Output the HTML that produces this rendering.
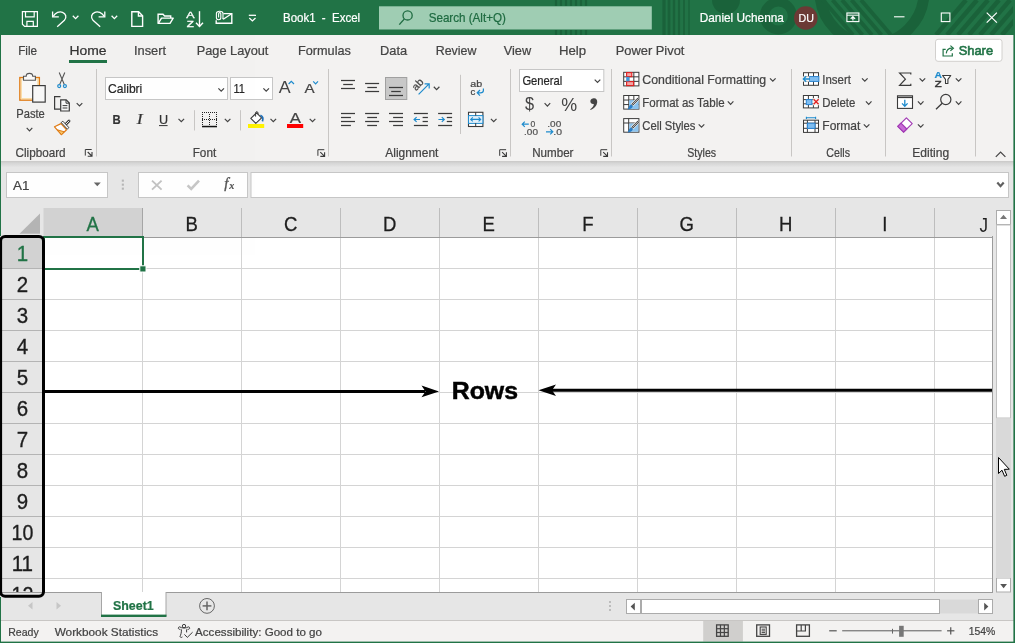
<!DOCTYPE html>
<html lang="en"><head><meta charset="utf-8"><title>Book1 - Excel</title>
<style>
html,body{margin:0;padding:0;background:#e6e6e6;overflow:hidden}
body{width:1015px;height:643px;font-family:"Liberation Sans",sans-serif}
svg{display:block;will-change:transform;opacity:0.999}
svg text{font-family:"Liberation Sans",sans-serif;white-space:pre}
</style></head><body>
<svg width="1015" height="643" viewBox="0 0 1015 643">
<g id="backgrounds">
<rect x="0" y="0" width="1015" height="643" fill="#e6e6e6"/>
<rect x="0" y="0" width="1015" height="35" fill="#217346"/>
<rect x="0" y="35" width="1015" height="126" fill="#f3f2f1"/>
<defs><linearGradient id="shad" x1="0" y1="0" x2="0" y2="1"><stop offset="0" stop-color="#c9c8c7"/><stop offset="0.35" stop-color="#d6d6d6"/><stop offset="1" stop-color="#e6e6e6"/></linearGradient></defs>
<rect x="0" y="161" width="1015" height="6.5" fill="url(#shad)"/>
</g>
<g id="grid">
<rect x="43.5" y="237" width="949" height="355" fill="#fff"/>
<rect x="43.5" y="236" width="949" height="1" fill="#e6e6e6"/>
<rect x="43.5" y="208" width="99" height="28.5" fill="#d2d2d2"/>
<rect x="1" y="237" width="42" height="31.5" fill="#d2d2d2"/>
<path d="M40 213.5L40 233.8L19.5 233.8Z" fill="#b4b4b4"/>
<line x1="142.5" y1="208" x2="142.5" y2="237" stroke="#bdbdbd" stroke-width="1" />
<line x1="241.5" y1="208" x2="241.5" y2="237" stroke="#bdbdbd" stroke-width="1" />
<line x1="340.5" y1="208" x2="340.5" y2="237" stroke="#bdbdbd" stroke-width="1" />
<line x1="439.5" y1="208" x2="439.5" y2="237" stroke="#bdbdbd" stroke-width="1" />
<line x1="538.5" y1="208" x2="538.5" y2="237" stroke="#bdbdbd" stroke-width="1" />
<line x1="637.5" y1="208" x2="637.5" y2="237" stroke="#bdbdbd" stroke-width="1" />
<line x1="736.5" y1="208" x2="736.5" y2="237" stroke="#bdbdbd" stroke-width="1" />
<line x1="835.5" y1="208" x2="835.5" y2="237" stroke="#bdbdbd" stroke-width="1" />
<line x1="934.5" y1="208" x2="934.5" y2="237" stroke="#bdbdbd" stroke-width="1" />
<line x1="142.5" y1="237" x2="142.5" y2="592" stroke="#d4d4d4" stroke-width="1" />
<line x1="241.5" y1="237" x2="241.5" y2="592" stroke="#d4d4d4" stroke-width="1" />
<line x1="340.5" y1="237" x2="340.5" y2="592" stroke="#d4d4d4" stroke-width="1" />
<line x1="439.5" y1="237" x2="439.5" y2="592" stroke="#d4d4d4" stroke-width="1" />
<line x1="538.5" y1="237" x2="538.5" y2="592" stroke="#d4d4d4" stroke-width="1" />
<line x1="637.5" y1="237" x2="637.5" y2="592" stroke="#d4d4d4" stroke-width="1" />
<line x1="736.5" y1="237" x2="736.5" y2="592" stroke="#d4d4d4" stroke-width="1" />
<line x1="835.5" y1="237" x2="835.5" y2="592" stroke="#d4d4d4" stroke-width="1" />
<line x1="934.5" y1="237" x2="934.5" y2="592" stroke="#d4d4d4" stroke-width="1" />
<line x1="1" y1="268.5" x2="43" y2="268.5" stroke="#b4b4b4" stroke-width="1" />
<line x1="43.5" y1="268.5" x2="992" y2="268.5" stroke="#d4d4d4" stroke-width="1" />
<line x1="1" y1="299.5" x2="43" y2="299.5" stroke="#b4b4b4" stroke-width="1" />
<line x1="43.5" y1="299.5" x2="992" y2="299.5" stroke="#d4d4d4" stroke-width="1" />
<line x1="1" y1="330.5" x2="43" y2="330.5" stroke="#b4b4b4" stroke-width="1" />
<line x1="43.5" y1="330.5" x2="992" y2="330.5" stroke="#d4d4d4" stroke-width="1" />
<line x1="1" y1="361.5" x2="43" y2="361.5" stroke="#b4b4b4" stroke-width="1" />
<line x1="43.5" y1="361.5" x2="992" y2="361.5" stroke="#d4d4d4" stroke-width="1" />
<line x1="1" y1="392.5" x2="43" y2="392.5" stroke="#b4b4b4" stroke-width="1" />
<line x1="43.5" y1="392.5" x2="992" y2="392.5" stroke="#d4d4d4" stroke-width="1" />
<line x1="1" y1="423.5" x2="43" y2="423.5" stroke="#b4b4b4" stroke-width="1" />
<line x1="43.5" y1="423.5" x2="992" y2="423.5" stroke="#d4d4d4" stroke-width="1" />
<line x1="1" y1="454.5" x2="43" y2="454.5" stroke="#b4b4b4" stroke-width="1" />
<line x1="43.5" y1="454.5" x2="992" y2="454.5" stroke="#d4d4d4" stroke-width="1" />
<line x1="1" y1="485.5" x2="43" y2="485.5" stroke="#b4b4b4" stroke-width="1" />
<line x1="43.5" y1="485.5" x2="992" y2="485.5" stroke="#d4d4d4" stroke-width="1" />
<line x1="1" y1="516.5" x2="43" y2="516.5" stroke="#b4b4b4" stroke-width="1" />
<line x1="43.5" y1="516.5" x2="992" y2="516.5" stroke="#d4d4d4" stroke-width="1" />
<line x1="1" y1="547.5" x2="43" y2="547.5" stroke="#b4b4b4" stroke-width="1" />
<line x1="43.5" y1="547.5" x2="992" y2="547.5" stroke="#d4d4d4" stroke-width="1" />
<line x1="1" y1="578.5" x2="43" y2="578.5" stroke="#b4b4b4" stroke-width="1" />
<line x1="43.5" y1="578.5" x2="992" y2="578.5" stroke="#d4d4d4" stroke-width="1" />
<line x1="43" y1="237.5" x2="992.5" y2="237.5" stroke="#9b9b9b" stroke-width="1" />
<line x1="142.5" y1="208" x2="142.5" y2="237" stroke="#a6a6a6" stroke-width="1" />
<line x1="992.5" y1="236" x2="992.5" y2="592.5" stroke="#9b9b9b" stroke-width="1" />
<line x1="1" y1="592.5" x2="101.5" y2="592.5" stroke="#9b9b9b" stroke-width="1" />
<line x1="166" y1="592.5" x2="993" y2="592.5" stroke="#9b9b9b" stroke-width="1" />
<text x="92.8" y="231.2" font-size="20.6" fill="#217346" text-anchor="middle" stroke="#217346" stroke-width="0.3" transform="translate(9.28 0) scale(0.9 1)">A</text>
<text x="191.8" y="231.2" font-size="20.6" fill="#1e1e1e" text-anchor="middle" stroke="#1e1e1e" stroke-width="0.3" transform="translate(19.18 0) scale(0.9 1)">B</text>
<text x="290.8" y="231.2" font-size="20.6" fill="#1e1e1e" text-anchor="middle" stroke="#1e1e1e" stroke-width="0.3" transform="translate(29.08 0) scale(0.9 1)">C</text>
<text x="389.8" y="231.2" font-size="20.6" fill="#1e1e1e" text-anchor="middle" stroke="#1e1e1e" stroke-width="0.3" transform="translate(38.98 0) scale(0.9 1)">D</text>
<text x="488.8" y="231.2" font-size="20.6" fill="#1e1e1e" text-anchor="middle" stroke="#1e1e1e" stroke-width="0.3" transform="translate(48.88 0) scale(0.9 1)">E</text>
<text x="587.8" y="231.2" font-size="20.6" fill="#1e1e1e" text-anchor="middle" stroke="#1e1e1e" stroke-width="0.3" transform="translate(58.78 0) scale(0.9 1)">F</text>
<text x="686.8" y="231.2" font-size="20.6" fill="#1e1e1e" text-anchor="middle" stroke="#1e1e1e" stroke-width="0.3" transform="translate(68.68 0) scale(0.9 1)">G</text>
<text x="785.8" y="231.2" font-size="20.6" fill="#1e1e1e" text-anchor="middle" stroke="#1e1e1e" stroke-width="0.3" transform="translate(78.58 0) scale(0.9 1)">H</text>
<text x="884.8" y="231.2" font-size="20.6" fill="#1e1e1e" text-anchor="middle" stroke="#1e1e1e" stroke-width="0.3" transform="translate(88.48 0) scale(0.9 1)">I</text>
<text x="979.5" y="231.8" font-size="20.4" fill="#1e1e1e" textLength="8.5" lengthAdjust="spacingAndGlyphs">J</text>
<text x="22.4" y="260.9" font-size="22.3" fill="#217346" textLength="11.4" lengthAdjust="spacingAndGlyphs" text-anchor="middle" stroke="#217346" stroke-width="0.35">1</text>
<text x="22.4" y="291.9" font-size="22.3" fill="#1e1e1e" textLength="11.4" lengthAdjust="spacingAndGlyphs" text-anchor="middle" stroke="#1e1e1e" stroke-width="0.35">2</text>
<text x="22.4" y="322.9" font-size="22.3" fill="#1e1e1e" textLength="11.4" lengthAdjust="spacingAndGlyphs" text-anchor="middle" stroke="#1e1e1e" stroke-width="0.35">3</text>
<text x="22.4" y="353.9" font-size="22.3" fill="#1e1e1e" textLength="11.4" lengthAdjust="spacingAndGlyphs" text-anchor="middle" stroke="#1e1e1e" stroke-width="0.35">4</text>
<text x="22.4" y="384.9" font-size="22.3" fill="#1e1e1e" textLength="11.4" lengthAdjust="spacingAndGlyphs" text-anchor="middle" stroke="#1e1e1e" stroke-width="0.35">5</text>
<text x="22.4" y="415.9" font-size="22.3" fill="#1e1e1e" textLength="11.4" lengthAdjust="spacingAndGlyphs" text-anchor="middle" stroke="#1e1e1e" stroke-width="0.35">6</text>
<text x="22.4" y="446.9" font-size="22.3" fill="#1e1e1e" textLength="11.4" lengthAdjust="spacingAndGlyphs" text-anchor="middle" stroke="#1e1e1e" stroke-width="0.35">7</text>
<text x="22.4" y="477.9" font-size="22.3" fill="#1e1e1e" textLength="11.4" lengthAdjust="spacingAndGlyphs" text-anchor="middle" stroke="#1e1e1e" stroke-width="0.35">8</text>
<text x="22.4" y="508.9" font-size="22.3" fill="#1e1e1e" textLength="11.4" lengthAdjust="spacingAndGlyphs" text-anchor="middle" stroke="#1e1e1e" stroke-width="0.35">9</text>
<text x="22.4" y="539.9" font-size="22.3" fill="#1e1e1e" textLength="21.8" lengthAdjust="spacingAndGlyphs" text-anchor="middle" stroke="#1e1e1e" stroke-width="0.35">10</text>
<text x="22.4" y="570.9" font-size="22.3" fill="#1e1e1e" textLength="21.4" lengthAdjust="spacingAndGlyphs" text-anchor="middle" stroke="#1e1e1e" stroke-width="0.35">11</text>
<clipPath id="c12"><rect x="0" y="578" width="43" height="14"/></clipPath>
<text x="22.4" y="601.9" font-size="22.3" fill="#1e1e1e" textLength="21.8" lengthAdjust="spacingAndGlyphs" text-anchor="middle" stroke="#1e1e1e" stroke-width="0.35" clip-path="url(#c12)">12</text>
<rect x="44" y="237" width="99" height="32" fill="none" stroke="#217346" stroke-width="2"/>
<rect x="139.8" y="265.8" width="6.2" height="6.2" fill="#217346" stroke="#fff" stroke-width="1"/>
</g>
<g id="annotation">
<rect x="0.6" y="236.6" width="42.9" height="359.7" fill="none" stroke="#000" stroke-width="3" rx="4.5"/>
<line x1="44" y1="391.45" x2="425" y2="391.45" stroke="#000" stroke-width="3" />
<path d="M439 391.4L421.5 385.6L425.5 391.4L421.5 397.2Z" fill="#000"/>
<line x1="552" y1="390.2" x2="992" y2="390.2" stroke="#000" stroke-width="3" />
<path d="M538.5 390.2L556 384.4L552 390.2L556 396Z" fill="#000"/>
<text x="451.7" y="399.3" font-size="23" fill="#000" textLength="66.3" lengthAdjust="spacingAndGlyphs" font-weight="bold" stroke="#000" stroke-width="0.45">Rows</text>
</g>
<g id="scrollbars">
<rect x="996.5" y="210.5" width="14" height="14" fill="#fff" stroke="#ababab" stroke-width="1"/>
<path d="M1000 218.9L1003.5 214.8L1007 218.9Z" fill="#777"/>
<rect x="996.5" y="225" width="14" height="193" fill="#fff" stroke="#c0c0c0" stroke-width="1"/>
<rect x="996.5" y="578" width="14" height="14" fill="#fff" stroke="#ababab" stroke-width="1"/>
<path d="M1000.2 584L1003.6 588.2L1007 584Z" fill="#555"/>
<rect x="996" y="418.5" width="15" height="159.5" fill="#d9d9d9"/>
<path d="M998.5 457.5L998.5 473.5L1002 470.2L1004.6 476.3L1006.8 475.3L1004.3 469.4L1009.3 469.2Z" fill="#fff" stroke="#000" stroke-width="1"/>
</g>
<g id="sheetbar">
<rect x="101.5" y="592" width="64.5" height="23" fill="#fff"/>
<line x1="101.5" y1="592" x2="101.5" y2="616" stroke="#a6a6a6" stroke-width="1" />
<line x1="166" y1="592" x2="166" y2="616" stroke="#a6a6a6" stroke-width="1" />
<rect x="101" y="614.6" width="65.5" height="2.4" fill="#217346"/>
<text x="113.0" y="609.9" font-size="12.9" fill="#217346" stroke="#217346" stroke-width="0.22" textLength="40.7" lengthAdjust="spacingAndGlyphs" font-weight="bold">Sheet1</text>
<path d="M32.5 602L32.5 609.5L28 605.8Z" fill="#c6c6c6"/>
<path d="M56.5 602L56.5 609.5L61 605.8Z" fill="#c6c6c6"/>
<circle cx="207" cy="605.9" r="7.4" fill="none" stroke="#666" stroke-width="1"/>
<line x1="202.6" y1="605.9" x2="211.4" y2="605.9" stroke="#666" stroke-width="1.5" />
<line x1="207" y1="601.5" x2="207" y2="610.3" stroke="#666" stroke-width="1.5" />
<rect x="609.2" y="601.2" width="1.6" height="1.6" fill="#a6a6a6"/>
<rect x="609.2" y="605.2" width="1.6" height="1.6" fill="#a6a6a6"/>
<rect x="609.2" y="609.2" width="1.6" height="1.6" fill="#a6a6a6"/>
<rect x="978" y="599" width="15" height="15" fill="#d9d9d9"/>
<rect x="940" y="599.5" width="38.5" height="14" fill="#d9d9d9"/>
<rect x="626.5" y="599.5" width="14" height="14" fill="#fff" stroke="#ababab" stroke-width="1"/>
<path d="M634.8 602.8L634.8 610.4L630.6 606.6Z" fill="#555"/>
<rect x="641.5" y="599.5" width="298" height="14" fill="#fff" stroke="#ababab" stroke-width="1"/>
<rect x="978.5" y="599.5" width="14" height="14" fill="#fff" stroke="#ababab" stroke-width="1"/>
<path d="M984.2 602.8L984.2 610.4L988.4 606.6Z" fill="#555"/>
</g>
<g id="statusbar">
<rect x="0" y="620.5" width="1015" height="22.5" fill="#f3f2f1"/>
<line x1="0" y1="620.5" x2="1015" y2="620.5" stroke="#c8c6c4" stroke-width="1" />
<text x="8.2" y="635.5" font-size="11.3" fill="#444" stroke="#444" stroke-width="0.22" textLength="30.5" lengthAdjust="spacingAndGlyphs">Ready</text>
<text x="54.7" y="635.5" font-size="11.3" fill="#444" stroke="#444" stroke-width="0.22" textLength="103.4" lengthAdjust="spacingAndGlyphs">Workbook Statistics</text>
<text x="195.1" y="635.6" font-size="11.3" fill="#444" stroke="#444" stroke-width="0.22" textLength="126.9" lengthAdjust="spacingAndGlyphs">Accessibility: Good to go</text>
<rect x="703.2" y="621" width="39.7" height="20.6" fill="#d0cfcd"/>
<rect x="716.6" y="624.9" width="11.6" height="11.4" fill="none" stroke="#444" stroke-width="1.3"/>
<line x1="720.47" y1="624.9" x2="720.47" y2="636.3" stroke="#444" stroke-width="1.2" />
<line x1="716.6" y1="628.6999999999999" x2="728.2" y2="628.6999999999999" stroke="#444" stroke-width="1.2" />
<line x1="724.34" y1="624.9" x2="724.34" y2="636.3" stroke="#444" stroke-width="1.2" />
<line x1="716.6" y1="632.5" x2="728.2" y2="632.5" stroke="#444" stroke-width="1.2" />
<rect x="756.7" y="624.9" width="12.8" height="11.4" fill="none" stroke="#444" stroke-width="1.3"/>
<rect x="760.2" y="627" width="6" height="7.4" fill="none" stroke="#444" stroke-width="1.1"/>
<line x1="761.6" y1="629.2" x2="765" y2="629.2" stroke="#444" stroke-width="1" />
<line x1="761.6" y1="630.9" x2="765" y2="630.9" stroke="#444" stroke-width="1" />
<line x1="761.6" y1="632.6" x2="765" y2="632.6" stroke="#444" stroke-width="1" />
<rect x="796.6" y="624.9" width="12.8" height="11.4" fill="none" stroke="#444" stroke-width="1.3"/>
<path d="M801.2 624.9V630.6M805.4 624.9V631H796.6" fill="none" stroke="#444" stroke-width="1.2"/>
<line x1="829.2" y1="630.8" x2="836.7" y2="630.8" stroke="#555" stroke-width="1.2" />
<line x1="842.2" y1="630.8" x2="941.6" y2="630.8" stroke="#5a5a5a" stroke-width="1" />
<line x1="892.5" y1="628.8" x2="892.5" y2="633.6" stroke="#666" stroke-width="1" />
<rect x="899.1" y="625.8" width="4.6" height="11" fill="#777"/>
<line x1="947.1" y1="630.8" x2="954.4" y2="630.8" stroke="#555" stroke-width="1.2" />
<line x1="950.75" y1="627.2" x2="950.75" y2="634.4" stroke="#555" stroke-width="1.2" />
<circle cx="184" cy="626.1" r="1.7" fill="none" stroke="#3b3b3b" stroke-width="1"/>
<path d="M180.4 629.4C178 629.6 177.6 627.2 179.6 626.8C181.4 628.4 186.6 628.4 188.4 626.8C190.4 627.2 190 629.6 187.6 629.4" fill="none" stroke="#3b3b3b" stroke-width="1"/>
<path d="M181.4 629.4C181.6 633 180.6 635 180 636.6C180.4 637.6 181.6 637.6 182.4 637" fill="none" stroke="#3b3b3b" stroke-width="1"/>
<path d="M186.6 629.4V632.4" fill="none" stroke="#3b3b3b" stroke-width="1"/>
<path d="M184.4 634.4L187.3 637.4L192.6 632.2" fill="none" stroke="#3b3b3b" stroke-width="1"/>
<text x="968.7" y="634.7" font-size="11.3" fill="#444" stroke="#444" stroke-width="0.22" textLength="26.6" lengthAdjust="spacingAndGlyphs">154%</text>
</g>
<g id="border">
<rect x="0" y="35" width="1" height="201" fill="#217346"/>
<rect x="0" y="597" width="1" height="46" fill="#217346"/>
<rect x="1013.4" y="35" width="1.6" height="608" fill="#217346"/>
<rect x="0" y="641.6" width="1015" height="1.4" fill="#217346"/>
</g>
<g id="titlebar">
<clipPath id="tbclip"><rect x="0" y="0" width="1013" height="35"/></clipPath>
<g clip-path="url(#tbclip)" opacity="0.9" fill="none" stroke="#1a6139">
<circle cx="872" cy="-8" r="52" stroke-width="11"/>
<circle cx="778.4" cy="16" r="14" stroke-width="9"/>
<circle cx="726" cy="0" r="14" fill="#1a6139" stroke="none"/>
<line x1="556" y1="0" x2="556" y2="6" stroke="#1a6139" stroke-width="2.2" />
<line x1="556" y1="30" x2="556" y2="35" stroke="#1a6139" stroke-width="2.2" />
<line x1="561" y1="0" x2="561" y2="6" stroke="#1a6139" stroke-width="2.2" />
<line x1="561" y1="30" x2="561" y2="35" stroke="#1a6139" stroke-width="2.2" />
<line x1="566" y1="0" x2="566" y2="6" stroke="#1a6139" stroke-width="2.2" />
<line x1="566" y1="30" x2="566" y2="35" stroke="#1a6139" stroke-width="2.2" />
<line x1="571" y1="0" x2="571" y2="6" stroke="#1a6139" stroke-width="2.2" />
<line x1="571" y1="30" x2="571" y2="35" stroke="#1a6139" stroke-width="2.2" />
<line x1="576" y1="0" x2="576" y2="6" stroke="#1a6139" stroke-width="2.2" />
<line x1="576" y1="30" x2="576" y2="35" stroke="#1a6139" stroke-width="2.2" />
<line x1="581" y1="0" x2="581" y2="6" stroke="#1a6139" stroke-width="2.2" />
<line x1="581" y1="30" x2="581" y2="35" stroke="#1a6139" stroke-width="2.2" />
<line x1="586" y1="0" x2="586" y2="6" stroke="#1a6139" stroke-width="2.2" />
<line x1="586" y1="30" x2="586" y2="35" stroke="#1a6139" stroke-width="2.2" />
<line x1="664" y1="0" x2="664" y2="35" stroke="#1a6139" stroke-width="3.2" />
<line x1="669" y1="0" x2="669" y2="35" stroke="#1a6139" stroke-width="2.85" />
<line x1="674" y1="0" x2="674" y2="35" stroke="#1a6139" stroke-width="2.5" />
<line x1="679" y1="0" x2="679" y2="35" stroke="#1a6139" stroke-width="2.1500000000000004" />
<line x1="684" y1="0" x2="684" y2="35" stroke="#1a6139" stroke-width="1.8000000000000003" />
<line x1="689" y1="0" x2="689" y2="35" stroke="#1a6139" stroke-width="1.4500000000000002" />
<line x1="823.0" y1="0" x2="853.0" y2="35" stroke="#1a6139" stroke-width="4" />
<line x1="832.5" y1="0" x2="862.5" y2="35" stroke="#1a6139" stroke-width="4" />
<line x1="842.0" y1="0" x2="872.0" y2="35" stroke="#1a6139" stroke-width="4" />
<line x1="851.5" y1="0" x2="881.5" y2="35" stroke="#1a6139" stroke-width="4" />
<line x1="861.0" y1="0" x2="891.0" y2="35" stroke="#1a6139" stroke-width="4" />
<line x1="966" y1="0" x2="936" y2="35" stroke="#1a6139" stroke-width="4.5" />
<line x1="977" y1="0" x2="947" y2="35" stroke="#1a6139" stroke-width="4.5" />
<line x1="988" y1="0" x2="958" y2="35" stroke="#1a6139" stroke-width="4.5" />
<line x1="999" y1="0" x2="969" y2="35" stroke="#1a6139" stroke-width="4.5" />
<line x1="1010" y1="0" x2="980" y2="35" stroke="#1a6139" stroke-width="4.5" />
<line x1="1021" y1="0" x2="991" y2="35" stroke="#1a6139" stroke-width="4.5" />
<line x1="1032" y1="0" x2="1002" y2="35" stroke="#1a6139" stroke-width="4.5" />
</g>
<path d="M22.4 11.7H37.4V26.4H24.6L22.4 24.2Z" fill="none" stroke="#fff" stroke-width="1.2"/>
<path d="M25.5 11.7V16.8H34.2V11.7" fill="none" stroke="#fff" stroke-width="1.2"/>
<path d="M26.9 26.4V21.4H33.3V26.4" fill="none" stroke="#fff" stroke-width="1.2"/>
<path d="M52.6 11.4V16.8H58.8" fill="none" stroke="#fff" stroke-width="1.3"/>
<path d="M53.2 16.4C55.5 12.5 59.5 11.2 62.5 12.3C66 13.6 67 17.5 64.4 20.3L57.2 26.8" fill="none" stroke="#fff" stroke-width="1.3"/>
<path d="M72.8 15.75L75.6 18.65L78.39999999999999 15.75" fill="none" stroke="#fff" stroke-width="1.3"/>
<path d="M104.8 11.4V16.8H98.6" fill="none" stroke="#fff" stroke-width="1.3"/>
<path d="M104.2 16.4C101.9 12.5 97.9 11.2 94.9 12.3C91.4 13.6 90.4 17.5 93 20.3L100.2 26.8" fill="none" stroke="#fff" stroke-width="1.3"/>
<path d="M111.60000000000001 15.75L114.4 18.65L117.2 15.75" fill="none" stroke="#fff" stroke-width="1.3"/>
<path d="M131.8 11.8H138.6L142.6 15.8V26.4H131.8Z" fill="none" stroke="#fff" stroke-width="1.4"/>
<path d="M138.4 11.8V16H142.6" fill="none" stroke="#fff" stroke-width="1.3"/>
<path d="M158.1 23.4V14.2H163L164.6 16H170.7V18" fill="none" stroke="#fff" stroke-width="1.4"/>
<path d="M158.3 23.4L161.5 18.1H173.2L170 23.4Z" fill="none" stroke="#fff" stroke-width="1.4" stroke-linejoin="round"/>
<text x="186.2" y="18.2" font-size="8.6" fill="#fff" textLength="8.3" lengthAdjust="spacingAndGlyphs" stroke="#fff" stroke-width="0.3">A</text>
<text x="186.7" y="26.8" font-size="8.6" fill="#fff" textLength="7.1" lengthAdjust="spacingAndGlyphs" stroke="#fff" stroke-width="0.3">Z</text>
<line x1="199.5" y1="11.2" x2="199.5" y2="26.4" stroke="#fff" stroke-width="1.4" />
<path d="M196 22.8L199.5 26.5L203 22.8" fill="none" stroke="#fff" stroke-width="1.4"/>
<path d="M223.4 13.6H231.8V23.2H216.2V20.2" fill="none" stroke="#fff" stroke-width="1.4"/>
<path d="M231.6 13.8L223.6 19L222.4 18.2" fill="none" stroke="#fff" stroke-width="1.3"/>
<path d="M218.6 17.6V13.8C218.6 12.2 220.8 12.2 220.8 13.8V17.8C220.8 20.4 216.4 20.4 216.4 17.8V13.4C216.4 10.6 223 10.6 223 13.4V18" fill="none" stroke="#fff" stroke-width="1.1"/>
<line x1="248.8" y1="15.3" x2="256" y2="15.3" stroke="#fff" stroke-width="1.3" />
<path d="M249.3 17.95L252.4 20.849999999999998L255.5 17.95" fill="none" stroke="#fff" stroke-width="1.3"/>
<text x="283.0" y="22" font-size="12.4" fill="#fff" stroke="#fff" stroke-width="0.22" textLength="77.1" lengthAdjust="spacingAndGlyphs">Book1  -  Excel</text>
<rect x="379" y="6.3" width="272.8" height="23.2" fill="#9fcdb3"/>
<circle cx="407.6" cy="15.4" r="4.6" fill="none" stroke="#1e6b41" stroke-width="1.3"/>
<line x1="404.4" y1="18.9" x2="399.3" y2="24.6" stroke="#1e6b41" stroke-width="1.4" />
<text x="428.7" y="22" font-size="12.4" fill="#1e6b41" stroke="#1e6b41" stroke-width="0.22" textLength="77.2" lengthAdjust="spacingAndGlyphs">Search (Alt+Q)</text>
<text x="699.7" y="22" font-size="12.4" fill="#fff" stroke="#fff" stroke-width="0.22" textLength="84.2" lengthAdjust="spacingAndGlyphs">Daniel Uchenna</text>
<circle cx="805.8" cy="18" r="11.8" fill="#6b3a35"/>
<text x="798.5" y="22" font-size="11.3" fill="#fff" stroke="#fff" stroke-width="0.22" textLength="15.4" lengthAdjust="spacingAndGlyphs">DU</text>
<rect x="846.9" y="13" width="12" height="8.6" fill="none" stroke="#fff" stroke-width="1.1"/>
<line x1="846.9" y1="15.2" x2="858.9" y2="15.2" stroke="#fff" stroke-width="1" />
<path d="M852.9 20.6V16.8M850.7 18.8L852.9 16.6L855.1 18.8" fill="none" stroke="#fff" stroke-width="1.2"/>
<line x1="894" y1="16.8" x2="904.5" y2="16.8" stroke="#fff" stroke-width="1.1" />
<rect x="941.3" y="13" width="8.6" height="8.6" fill="none" stroke="#fff" stroke-width="1.1"/>
<path d="M986.7 12.6L996.9 22.6M996.9 12.6L986.7 22.6" fill="none" stroke="#fff" stroke-width="1.2"/>
</g>
<g id="tabs">
<text x="18.2" y="55" font-size="12.4" fill="#444" stroke="#444" stroke-width="0.22" textLength="18.9" lengthAdjust="spacingAndGlyphs">File</text>
<text x="69.5" y="55" font-size="12.4" fill="#333" stroke="#333" stroke-width="0.22" textLength="37.1" lengthAdjust="spacingAndGlyphs">Home</text>
<text x="134.0" y="55" font-size="12.4" fill="#444" stroke="#444" stroke-width="0.22" textLength="32.1" lengthAdjust="spacingAndGlyphs">Insert</text>
<text x="196.7" y="55" font-size="12.4" fill="#444" stroke="#444" stroke-width="0.22" textLength="71.7" lengthAdjust="spacingAndGlyphs">Page Layout</text>
<text x="298.0" y="55" font-size="12.4" fill="#444" stroke="#444" stroke-width="0.22" textLength="52.9" lengthAdjust="spacingAndGlyphs">Formulas</text>
<text x="380.0" y="55" font-size="12.4" fill="#444" stroke="#444" stroke-width="0.22" textLength="27.1" lengthAdjust="spacingAndGlyphs">Data</text>
<text x="435.7" y="55" font-size="12.4" fill="#444" stroke="#444" stroke-width="0.22" textLength="40.7" lengthAdjust="spacingAndGlyphs">Review</text>
<text x="503.7" y="55" font-size="12.4" fill="#444" stroke="#444" stroke-width="0.22" textLength="27.4" lengthAdjust="spacingAndGlyphs">View</text>
<text x="559.0" y="55" font-size="12.4" fill="#444" stroke="#444" stroke-width="0.22" textLength="27.1" lengthAdjust="spacingAndGlyphs">Help</text>
<text x="615.7" y="55" font-size="12.4" fill="#444" stroke="#444" stroke-width="0.22" textLength="68.7" lengthAdjust="spacingAndGlyphs">Power Pivot</text>
<rect x="69" y="60" width="38" height="3" fill="#217346"/>
<rect x="935.5" y="39.3" width="66.5" height="22" fill="#fff" stroke="#d2d0ce" stroke-width="1" rx="2.5"/>
<path d="M945.7 49.4H943.1V56H952.3V53.2" fill="none" stroke="#217346" stroke-width="1.2"/>
<path d="M946.3 53.4C946.6 50 948.6 48.2 952 48.2" fill="none" stroke="#217346" stroke-width="1.2"/>
<path d="M950.4 45.6L953.4 48.2L950.4 50.8" fill="none" stroke="#217346" stroke-width="1.2"/>
<text x="958.7" y="54.6" font-size="12.8" fill="#217346" textLength="34.4" lengthAdjust="spacingAndGlyphs" stroke="#217346" stroke-width="0.6">Share</text>
</g>
<g id="formulabar">
<rect x="6.5" y="172.5" width="101" height="25" fill="#fff" stroke="#c6c6c6" stroke-width="1"/>
<text x="13.0" y="190" font-size="12.6" fill="#444" stroke="#444" stroke-width="0.22" textLength="16.4" lengthAdjust="spacingAndGlyphs">A1</text>
<path d="M93.8 182.6H100.8L97.3 186.2Z" fill="#666"/>
<rect x="121.8" y="179.6" width="2.1" height="2.1" fill="#b6b6b6"/>
<rect x="121.8" y="183.6" width="2.1" height="2.1" fill="#b6b6b6"/>
<rect x="121.8" y="187.6" width="2.1" height="2.1" fill="#b6b6b6"/>
<rect x="138.5" y="172.5" width="109" height="25" fill="#fff" stroke="#c6c6c6" stroke-width="1"/>
<path d="M152 180.6L161.6 189.6M161.6 180.6L152 189.6" fill="none" stroke="#c2c2c2" stroke-width="1.9"/>
<path d="M187.6 185.4L191.2 189L199 180.6" fill="none" stroke="#c6c6c6" stroke-width="2.6"/>
<text x="224.2" y="187.8" font-size="15" fill="#555" font-style="italic" style='font-family:"Liberation Serif", serif' stroke="#555" stroke-width="0.35">f</text>
<text x="229.2" y="189.2" font-size="10" fill="#555" stroke="#555" stroke-width="0.22" font-weight="bold" font-style="italic" style='font-family:"Liberation Serif", serif'>x</text>
<rect x="251" y="172.5" width="757.5" height="25" fill="#fff" stroke="#c6c6c6" stroke-width="1"/>
<path d="M997.3 182.6L1000.5 186.20000000000002L1003.7 182.6" fill="none" stroke="#606060" stroke-width="2.2"/>
</g>
<g id="ribbon-clipboard">
<rect x="19.9" y="77.6" width="19.4" height="22.5" fill="#faf9f8" stroke="#e07b16" stroke-width="1.5"/>
<rect x="21.3" y="79" width="16.6" height="19.7" fill="none" stroke="#fbdca6" stroke-width="1.3"/>
<path d="M23.5 80.2V76.3H26.2C26.2 72.4 32.7 72.4 32.7 76.3H35.4V80.2Z" fill="#faf9f8" stroke="#555" stroke-width="1.1"/>
<rect x="32.7" y="85.6" width="12.5" height="16.5" fill="#f8f8f8" stroke="#3b3b3b" stroke-width="1.2"/>
<text x="16.3" y="117.6" font-size="12.4" fill="#444" stroke="#444" stroke-width="0.22" textLength="28.5" lengthAdjust="spacingAndGlyphs">Paste</text>
<path d="M26.7 127.95L29.5 130.85L32.3 127.95" fill="none" stroke="#444" stroke-width="1.2"/>
<path d="M59.2 72.5L64.2 84.3M64.8 72.5L59.8 84.3" fill="none" stroke="#555" stroke-width="1.1"/>
<circle cx="59.2" cy="86.1" r="1.5" fill="none" stroke="#1e8bcd" stroke-width="1.2"/>
<circle cx="64.9" cy="86.1" r="1.5" fill="none" stroke="#1e8bcd" stroke-width="1.2"/>
<path d="M60.6 109.2H54.6V96.7H60.5" fill="none" stroke="#3b3b3b" stroke-width="1.2"/>
<path d="M60.7 99.9H66.2L69.3 103V111H60.7Z" fill="#f8f8f8" stroke="#3b3b3b" stroke-width="1.2"/>
<path d="M66 100V103.2H69.2" fill="none" stroke="#3b3b3b" stroke-width="1"/>
<line x1="62.6" y1="105.6" x2="67.4" y2="105.6" stroke="#3b3b3b" stroke-width="1" />
<line x1="62.6" y1="108" x2="67.4" y2="108" stroke="#3b3b3b" stroke-width="1" />
<path d="M76.7 103.05L79.5 105.95L82.3 103.05" fill="none" stroke="#444" stroke-width="1.2"/>
<path d="M54.5 126.8L61 123.6L66.6 129.8L61.3 134.7Z" fill="#fff" stroke="#e07b16" stroke-width="1.2" stroke-linejoin="round"/>
<path d="M57.4 129.8L64.2 131.8L61.3 134.5Z" fill="#f9c868" stroke="#e07b16" stroke-width="1" stroke-linejoin="round"/>
<path d="M65.6 124.4L69 121" fill="none" stroke="#3b3b3b" stroke-width="2.8" stroke-linecap="round"/>
<path d="M65.6 124.4L69 121" fill="none" stroke="#fff" stroke-width="0.9" stroke-linecap="round"/>
<path d="M61.2 122.6L62.8 121.2L68.9 127.6L67.3 129.1Z" fill="#fff" stroke="#3b3b3b" stroke-width="1" stroke-linejoin="round"/>
<text x="15.5" y="157" font-size="12.4" fill="#444" stroke="#444" stroke-width="0.22" textLength="50.1" lengthAdjust="spacingAndGlyphs">Clipboard</text>
<path d="M85.3 155.6V149.5H91.7" fill="none" stroke="#3a3a3a" stroke-width="1"/>
<path d="M87.7 152L91.8 156M92.0 152V156.2H87.7" fill="none" stroke="#3a3a3a" stroke-width="1.1"/>
<line x1="96.5" y1="69" x2="96.5" y2="156.5" stroke="#c8c6c4" stroke-width="1" />
</g>
<g id="ribbon-font">
<rect x="105.5" y="77.5" width="122" height="22" fill="#fff" stroke="#c6c6c6" stroke-width="1"/>
<text x="108.1" y="92.7" font-size="13" fill="#262626" stroke="#262626" stroke-width="0.22" textLength="34.2" lengthAdjust="spacingAndGlyphs">Calibri</text>
<path d="M218.39999999999998 88.35L221.2 91.25L224.0 88.35" fill="none" stroke="#444" stroke-width="1.2"/>
<rect x="230.5" y="77.5" width="42" height="22" fill="#fff" stroke="#c6c6c6" stroke-width="1"/>
<text x="233.4" y="92.7" font-size="13" fill="#262626" stroke="#262626" stroke-width="0.22" textLength="11.4" lengthAdjust="spacingAndGlyphs">11</text>
<path d="M263.4 88.35L266.2 91.25L269.0 88.35" fill="none" stroke="#444" stroke-width="1.2"/>
<text x="278.7" y="92.5" font-size="17.4" fill="#444" textLength="11.9" lengthAdjust="spacingAndGlyphs">A</text>
<path d="M288.6 84L291.3 81.3L294 84" fill="none" stroke="#1e8bcd" stroke-width="1.2"/>
<text x="304.6" y="92.5" font-size="12.8" fill="#444" stroke="#444" stroke-width="0.22" textLength="10.1" lengthAdjust="spacingAndGlyphs">A</text>
<path d="M313.2 81.4L315.6 83.8L318 81.4" fill="none" stroke="#1e8bcd" stroke-width="1.2"/>
<text x="112.4" y="123.7" font-size="13.6" fill="#333" stroke="#333" stroke-width="0.22" textLength="8.2" lengthAdjust="spacingAndGlyphs" font-weight="bold">B</text>
<text x="136.7" y="123.7" font-size="15" fill="#333" stroke="#333" stroke-width="0.22" textLength="5.9" lengthAdjust="spacingAndGlyphs" font-style="italic" style='font-family:"Liberation Serif", serif'>I</text>
<text x="159.0" y="123.5" font-size="13" fill="#333" stroke="#333" stroke-width="0.22" textLength="9.1" lengthAdjust="spacingAndGlyphs">U</text>
<line x1="159" y1="125.6" x2="167.6" y2="125.6" stroke="#333" stroke-width="1" />
<path d="M178.5 118.85L181.3 121.75L184.10000000000002 118.85" fill="none" stroke="#444" stroke-width="1.2"/>
<line x1="194.5" y1="110.2" x2="194.5" y2="130.5" stroke="#c8c6c4" stroke-width="1" />
<rect x="202.0" y="112" width="1" height="1" fill="#222"/>
<rect x="202.0" y="119" width="1" height="1" fill="#222"/>
<rect x="204.0" y="112" width="1" height="1" fill="#222"/>
<rect x="204.0" y="119" width="1" height="1" fill="#222"/>
<rect x="206.0" y="112" width="1" height="1" fill="#222"/>
<rect x="206.0" y="119" width="1" height="1" fill="#222"/>
<rect x="208.0" y="112" width="1" height="1" fill="#222"/>
<rect x="208.0" y="119" width="1" height="1" fill="#222"/>
<rect x="210.0" y="112" width="1" height="1" fill="#222"/>
<rect x="210.0" y="119" width="1" height="1" fill="#222"/>
<rect x="212.0" y="112" width="1" height="1" fill="#222"/>
<rect x="212.0" y="119" width="1" height="1" fill="#222"/>
<rect x="214.0" y="112" width="1" height="1" fill="#222"/>
<rect x="214.0" y="119" width="1" height="1" fill="#222"/>
<rect x="216.0" y="112" width="1" height="1" fill="#222"/>
<rect x="216.0" y="119" width="1" height="1" fill="#222"/>
<rect x="202" y="114" width="1" height="1" fill="#222"/>
<rect x="209" y="114" width="1" height="1" fill="#222"/>
<rect x="216" y="114" width="1" height="1" fill="#222"/>
<rect x="202" y="116" width="1" height="1" fill="#222"/>
<rect x="209" y="116" width="1" height="1" fill="#222"/>
<rect x="216" y="116" width="1" height="1" fill="#222"/>
<rect x="202" y="118" width="1" height="1" fill="#222"/>
<rect x="209" y="118" width="1" height="1" fill="#222"/>
<rect x="216" y="118" width="1" height="1" fill="#222"/>
<rect x="202" y="120" width="1" height="1" fill="#222"/>
<rect x="209" y="120" width="1" height="1" fill="#222"/>
<rect x="216" y="120" width="1" height="1" fill="#222"/>
<rect x="202" y="122" width="1" height="1" fill="#222"/>
<rect x="209" y="122" width="1" height="1" fill="#222"/>
<rect x="216" y="122" width="1" height="1" fill="#222"/>
<rect x="202" y="124" width="1" height="1" fill="#222"/>
<rect x="209" y="124" width="1" height="1" fill="#222"/>
<rect x="216" y="124" width="1" height="1" fill="#222"/>
<rect x="202" y="125.8" width="15" height="1.5" fill="#111"/>
<path d="M224.79999999999998 118.85L227.6 121.75L230.4 118.85" fill="none" stroke="#444" stroke-width="1.2"/>
<line x1="240.5" y1="110.2" x2="240.5" y2="130.5" stroke="#c8c6c4" stroke-width="1" />
<path d="M250.8 118.4L256.6 112.8L261.6 117.8L255.8 123.4Z" fill="#fff" stroke="#3b3b3b" stroke-width="1.1" stroke-linejoin="round"/>
<path d="M255.6 116.6V113C255.6 111.2 258 111.2 258 113V114.4" fill="none" stroke="#3b3b3b" stroke-width="1"/>
<path d="M260.4 115.2C262.8 116.2 263.4 118.6 262.4 121.4" fill="none" stroke="#1e6fb8" stroke-width="1.7"/>
<rect x="248" y="124" width="16.2" height="4" fill="#fff200"/>
<path d="M270.5 118.85L273.3 121.75L276.1 118.85" fill="none" stroke="#444" stroke-width="1.2"/>
<text x="289.7" y="122.7" font-size="13.8" fill="#444" stroke="#444" stroke-width="0.22" textLength="11.2" lengthAdjust="spacingAndGlyphs">A</text>
<rect x="287" y="124" width="16.2" height="4" fill="#ff0000"/>
<path d="M309.7 118.85L312.5 121.75L315.3 118.85" fill="none" stroke="#444" stroke-width="1.2"/>
<text x="192.7" y="157" font-size="12.4" fill="#444" stroke="#444" stroke-width="0.22" textLength="23.5" lengthAdjust="spacingAndGlyphs">Font</text>
<path d="M317.9 155.79999999999998V149.7H324.29999999999995" fill="none" stroke="#3a3a3a" stroke-width="1"/>
<path d="M320.29999999999995 152.2L324.4 156.2M324.59999999999997 152.2V156.39999999999998H320.29999999999995" fill="none" stroke="#3a3a3a" stroke-width="1.1"/>
<line x1="328.5" y1="69" x2="328.5" y2="156.5" stroke="#c8c6c4" stroke-width="1" />
</g>
<g id="ribbon-alignment">
<line x1="341.0" y1="80.5" x2="355.0" y2="80.5" stroke="#3b3b3b" stroke-width="1.25" />
<line x1="343.2" y1="84.5" x2="352.8" y2="84.5" stroke="#3b3b3b" stroke-width="1.25" />
<line x1="341.0" y1="88.5" x2="355.0" y2="88.5" stroke="#3b3b3b" stroke-width="1.25" />
<line x1="365.1" y1="83.5" x2="379.1" y2="83.5" stroke="#3b3b3b" stroke-width="1.25" />
<line x1="367.3" y1="87.5" x2="376.90000000000003" y2="87.5" stroke="#3b3b3b" stroke-width="1.25" />
<line x1="365.1" y1="91.5" x2="379.1" y2="91.5" stroke="#3b3b3b" stroke-width="1.25" />
<rect x="385.5" y="77.5" width="21.3" height="22" fill="#c8c8c8" stroke="#a0a0a0" stroke-width="1"/>
<line x1="389.0" y1="87.5" x2="403.0" y2="87.5" stroke="#3b3b3b" stroke-width="1.25" />
<line x1="391.2" y1="91.5" x2="400.8" y2="91.5" stroke="#3b3b3b" stroke-width="1.25" />
<line x1="389.0" y1="95.5" x2="403.0" y2="95.5" stroke="#3b3b3b" stroke-width="1.25" />
<text x="0" y="0" font-size="10.6" fill="#444" stroke="#444" stroke-width="0.22" transform="translate(416.2 91.2) rotate(-48)">ab</text>
<path d="M418.6 94.4L428.8 84.2M424.6 83.8H429.2V88.4" fill="none" stroke="#1e8bcd" stroke-width="1.2"/>
<path d="M433.8 86.75L436.6 89.65L439.40000000000003 86.75" fill="none" stroke="#444" stroke-width="1.2"/>
<line x1="460.5" y1="74.8" x2="460.5" y2="134" stroke="#c8c6c4" stroke-width="1" />
<text x="470.2" y="87.4" font-size="9.6" fill="#444" stroke="#444" stroke-width="0.22" textLength="11.9" lengthAdjust="spacingAndGlyphs">ab</text>
<text x="470.5" y="94.8" font-size="9.6" fill="#444" stroke="#444" stroke-width="0.22">c</text>
<path d="M483.4 88.6V90.4C483.4 92.6 481.8 92.8 480.4 92.8H477.4M480 90L477.2 92.8L480 95.6" fill="none" stroke="#1e8bcd" stroke-width="1.2"/>
<line x1="341" y1="113.5" x2="355" y2="113.5" stroke="#3b3b3b" stroke-width="1.25" />
<line x1="341" y1="117.5" x2="350.9" y2="117.5" stroke="#3b3b3b" stroke-width="1.25" />
<line x1="341" y1="121.5" x2="355" y2="121.5" stroke="#3b3b3b" stroke-width="1.25" />
<line x1="341" y1="125.5" x2="350.9" y2="125.5" stroke="#3b3b3b" stroke-width="1.25" />
<line x1="365.1" y1="113.5" x2="379.1" y2="113.5" stroke="#3b3b3b" stroke-width="1.25" />
<line x1="367.20000000000005" y1="117.5" x2="377.00000000000006" y2="117.5" stroke="#3b3b3b" stroke-width="1.25" />
<line x1="365.1" y1="121.5" x2="379.1" y2="121.5" stroke="#3b3b3b" stroke-width="1.25" />
<line x1="367.20000000000005" y1="125.5" x2="377.00000000000006" y2="125.5" stroke="#3b3b3b" stroke-width="1.25" />
<line x1="389" y1="113.5" x2="403" y2="113.5" stroke="#3b3b3b" stroke-width="1.25" />
<line x1="393.1" y1="117.5" x2="403.0" y2="117.5" stroke="#3b3b3b" stroke-width="1.25" />
<line x1="389" y1="121.5" x2="403" y2="121.5" stroke="#3b3b3b" stroke-width="1.25" />
<line x1="393.1" y1="125.5" x2="403.0" y2="125.5" stroke="#3b3b3b" stroke-width="1.25" />
<line x1="413.9" y1="113.5" x2="427.9" y2="113.5" stroke="#3b3b3b" stroke-width="1.25" />
<line x1="422.59999999999997" y1="117.5" x2="427.9" y2="117.5" stroke="#3b3b3b" stroke-width="1.25" />
<line x1="422.59999999999997" y1="121.5" x2="427.9" y2="121.5" stroke="#3b3b3b" stroke-width="1.25" />
<line x1="413.9" y1="125.5" x2="427.9" y2="125.5" stroke="#3b3b3b" stroke-width="1.25" />
<path d="M420 119.5H414.2M416.6 117.1L414.1 119.5L416.6 121.9" fill="none" stroke="#1e8bcd" stroke-width="1.2"/>
<line x1="438.1" y1="113.5" x2="452.1" y2="113.5" stroke="#3b3b3b" stroke-width="1.25" />
<line x1="446.8" y1="117.5" x2="452.1" y2="117.5" stroke="#3b3b3b" stroke-width="1.25" />
<line x1="446.8" y1="121.5" x2="452.1" y2="121.5" stroke="#3b3b3b" stroke-width="1.25" />
<line x1="438.1" y1="125.5" x2="452.1" y2="125.5" stroke="#3b3b3b" stroke-width="1.25" />
<path d="M438.4 119.5H444.2M441.8 117.1L444.3 119.5L441.8 121.9" fill="none" stroke="#1e8bcd" stroke-width="1.2"/>
<rect x="468.5" y="112.3" width="14.4" height="14.2" fill="#fff" stroke="#3b3b3b" stroke-width="1.1"/>
<rect x="468.5" y="115.6" width="14.4" height="7.8" fill="#e3f0fa" stroke="#1e8bcd" stroke-width="1"/>
<line x1="475.7" y1="112.3" x2="475.7" y2="115.6" stroke="#3b3b3b" stroke-width="1" />
<line x1="475.7" y1="123.2" x2="475.7" y2="126.5" stroke="#3b3b3b" stroke-width="1" />
<path d="M470.8 119.4H480.6M472.8 117.4L470.7 119.4L472.8 121.4M478.6 117.4L480.7 119.4L478.6 121.4" fill="none" stroke="#1e8bcd" stroke-width="1.1"/>
<path d="M490.9 118.85L493.7 121.75L496.5 118.85" fill="none" stroke="#444" stroke-width="1.2"/>
<text x="385.3" y="157" font-size="12.4" fill="#444" stroke="#444" stroke-width="0.22" textLength="53.1" lengthAdjust="spacingAndGlyphs">Alignment</text>
<path d="M499.7 155.79999999999998V149.7H506.09999999999997" fill="none" stroke="#3a3a3a" stroke-width="1"/>
<path d="M502.09999999999997 152.2L506.2 156.2M506.4 152.2V156.39999999999998H502.09999999999997" fill="none" stroke="#3a3a3a" stroke-width="1.1"/>
<line x1="510.5" y1="69" x2="510.5" y2="156.5" stroke="#c8c6c4" stroke-width="1" />
</g>
<g id="ribbon-number">
<rect x="519.5" y="69.5" width="84.3" height="22" fill="#fff" stroke="#c6c6c6" stroke-width="1"/>
<text x="522.4" y="84.8" font-size="13" fill="#262626" stroke="#262626" stroke-width="0.22" textLength="39.9" lengthAdjust="spacingAndGlyphs">General</text>
<path d="M594.7 79.55L597.5 82.45L600.3 79.55" fill="none" stroke="#444" stroke-width="1.2"/>
<text x="525.1" y="110" font-size="18.2" fill="#444" textLength="9.1" lengthAdjust="spacingAndGlyphs">$</text>
<path d="M544.6 103.14999999999999L547.4 106.05L550.1999999999999 103.14999999999999" fill="none" stroke="#444" stroke-width="1.2"/>
<text x="561.2" y="110.8" font-size="19" fill="#444" textLength="15.9" lengthAdjust="spacingAndGlyphs">%</text>
<path d="M592.8 98.6C595.6 97.6 597.6 99.6 597.2 102.6C596.8 106 594 108.6 590.6 110L590.2 109.2C592.6 107.8 593.8 106 593.8 104C591.6 104.4 590 102.8 590.4 100.8C590.6 99.6 591.6 98.8 592.8 98.6Z" fill="#444"/>
<path d="M528.8 124.2H522.4M524.8 121.6L522.2 124.2L524.8 126.8" fill="none" stroke="#1e8bcd" stroke-width="1.2"/>
<text x="530.6" y="127.4" font-size="8.6" fill="#555" stroke="#555" stroke-width="0.22">0</text>
<text x="524.1" y="135.2" font-size="8.6" fill="#555" stroke="#555" stroke-width="0.22" textLength="13.9" lengthAdjust="spacingAndGlyphs">.00</text>
<text x="547.3" y="127.4" font-size="8.6" fill="#555" stroke="#555" stroke-width="0.22" textLength="13.9" lengthAdjust="spacingAndGlyphs">.00</text>
<path d="M546 131.8H552.6M550.2 129.2L552.8 131.8L550.2 134.4" fill="none" stroke="#1e8bcd" stroke-width="1.2"/>
<text x="553.3" y="135.2" font-size="8.6" fill="#555" stroke="#555" stroke-width="0.22" textLength="8.7" lengthAdjust="spacingAndGlyphs">.0</text>
<text x="532.2" y="157" font-size="12.4" fill="#444" stroke="#444" stroke-width="0.22" textLength="41.3" lengthAdjust="spacingAndGlyphs">Number</text>
<path d="M600.8 155.79999999999998V149.7H607.1999999999999" fill="none" stroke="#3a3a3a" stroke-width="1"/>
<path d="M603.1999999999999 152.2L607.3 156.2M607.5 152.2V156.39999999999998H603.1999999999999" fill="none" stroke="#3a3a3a" stroke-width="1.1"/>
<line x1="611.5" y1="69" x2="611.5" y2="156.5" stroke="#c8c6c4" stroke-width="1" />
</g>
<g id="ribbon-styles">
<rect x="623.7" y="72.3" width="15.2" height="13.6" fill="#fff" stroke="#3b3b3b" stroke-width="1"/>
<line x1="623.7" y1="76.83333333333333" x2="638.9000000000001" y2="76.83333333333333" stroke="#3b3b3b" stroke-width="1" />
<line x1="623.7" y1="81.36666666666666" x2="638.9000000000001" y2="81.36666666666666" stroke="#3b3b3b" stroke-width="1" />
<line x1="628.7666666666668" y1="72.3" x2="628.7666666666668" y2="85.89999999999999" stroke="#3b3b3b" stroke-width="1" />
<line x1="633.8333333333334" y1="72.3" x2="633.8333333333334" y2="85.89999999999999" stroke="#3b3b3b" stroke-width="1" />
<rect x="626.6" y="72.6" width="5.2" height="4" fill="#f4a5a5" stroke="#e02020" stroke-width="1.1"/>
<rect x="626.6" y="81.6" width="7" height="4" fill="#f4a5a5" stroke="#e02020" stroke-width="1.1"/>
<rect x="626.2" y="76.8" width="3.2" height="4.6" fill="#3f97dc"/>
<text x="642.3" y="83.6" font-size="12.4" fill="#444" stroke="#444" stroke-width="0.22" textLength="123.9" lengthAdjust="spacingAndGlyphs">Conditional Formatting</text>
<path d="M770.0 78.35L772.8 81.25L775.5999999999999 78.35" fill="none" stroke="#444" stroke-width="1.2"/>
<rect x="623.7" y="95.5" width="15.2" height="13.6" fill="#fff" stroke="#3b3b3b" stroke-width="1"/>
<line x1="623.7" y1="100.03333333333333" x2="638.9000000000001" y2="100.03333333333333" stroke="#3b3b3b" stroke-width="1" />
<line x1="623.7" y1="104.56666666666666" x2="638.9000000000001" y2="104.56666666666666" stroke="#3b3b3b" stroke-width="1" />
<line x1="628.7666666666668" y1="95.5" x2="628.7666666666668" y2="109.1" stroke="#3b3b3b" stroke-width="1" />
<line x1="633.8333333333334" y1="95.5" x2="633.8333333333334" y2="109.1" stroke="#3b3b3b" stroke-width="1" />
<rect x="629" y="100.2" width="9.6" height="8.8" fill="#8cc3ee"/>
<path d="M628.6 107.4C629.6 104.6 631.4 104 632.4 105.4C633.4 107 631.4 109 627.6 109.4Z" fill="#2a7fc9"/>
<path d="M632 105L638.4 98.4" fill="none" stroke="#fff" stroke-width="3.4"/>
<path d="M632 105L638.4 98.4" fill="none" stroke="#3b3b3b" stroke-width="2.2"/>
<path d="M632.4 104.6L638 98.8" fill="none" stroke="#fff" stroke-width="0.7"/>
<text x="642.3" y="106.7" font-size="12.4" fill="#444" stroke="#444" stroke-width="0.22" textLength="82.3" lengthAdjust="spacingAndGlyphs">Format as Table</text>
<path d="M727.8000000000001 101.45L730.6 104.35000000000001L733.4 101.45" fill="none" stroke="#444" stroke-width="1.2"/>
<rect x="623.7" y="118.6" width="15.2" height="13.6" fill="#fff" stroke="#3b3b3b" stroke-width="1"/>
<line x1="623.7" y1="123" x2="638.9" y2="123" stroke="#3b3b3b" stroke-width="1" />
<line x1="628.7" y1="118.6" x2="628.7" y2="132.2" stroke="#3b3b3b" stroke-width="1" />
<rect x="629.2" y="123.5" width="9.2" height="8.2" fill="#8cc3ee"/>
<path d="M628.6 130.4C629.6 127.6 631.4 127 632.4 128.4C633.4 130 631.4 132 627.6 132.4Z" fill="#2a7fc9"/>
<path d="M632 128L638.4 121.4" fill="none" stroke="#fff" stroke-width="3.4"/>
<path d="M632 128L638.4 121.4" fill="none" stroke="#3b3b3b" stroke-width="2.2"/>
<path d="M632.4 127.6L638 121.8" fill="none" stroke="#fff" stroke-width="0.7"/>
<text x="642.3" y="129.6" font-size="12.4" fill="#444" stroke="#444" stroke-width="0.22" textLength="53.1" lengthAdjust="spacingAndGlyphs">Cell Styles</text>
<path d="M698.7 124.35L701.5 127.25L704.3 124.35" fill="none" stroke="#444" stroke-width="1.2"/>
<text x="687.2" y="157" font-size="12.4" fill="#444" stroke="#444" stroke-width="0.22" textLength="28.9" lengthAdjust="spacingAndGlyphs">Styles</text>
<line x1="791.5" y1="69" x2="791.5" y2="156.5" stroke="#c8c6c4" stroke-width="1" />
</g>
<g id="ribbon-cells">
<rect x="803.5" y="72.7" width="15" height="12.6" fill="#fff" stroke="#3b3b3b" stroke-width="1"/>
<line x1="803.5" y1="76.9" x2="818.5" y2="76.9" stroke="#3b3b3b" stroke-width="1" />
<line x1="803.5" y1="81.1" x2="818.5" y2="81.1" stroke="#3b3b3b" stroke-width="1" />
<line x1="808.5" y1="72.7" x2="808.5" y2="85.3" stroke="#3b3b3b" stroke-width="1" />
<line x1="813.5" y1="72.7" x2="813.5" y2="85.3" stroke="#3b3b3b" stroke-width="1" />
<rect x="809.5" y="76.6" width="9.4" height="4.8" fill="#7fbdf0" stroke="#2a86d6" stroke-width="0.9"/>
<rect x="802.4" y="76.4" width="6.8" height="5.2" fill="#f3f2f1"/>
<path d="M810 79H803.4M806.2 76.2L803.3 79L806.2 81.8" fill="none" stroke="#1e8bcd" stroke-width="1.3"/>
<text x="822.3" y="83.9" font-size="12.4" fill="#444" stroke="#444" stroke-width="0.22" textLength="28.6" lengthAdjust="spacingAndGlyphs">Insert</text>
<path d="M862.0 78.35L864.8 81.25L867.5999999999999 78.35" fill="none" stroke="#444" stroke-width="1.2"/>
<rect x="803.4" y="95.5" width="15" height="12.4" fill="#fff" stroke="#3b3b3b" stroke-width="1"/>
<line x1="803.4" y1="99.6" x2="818.4" y2="99.6" stroke="#3b3b3b" stroke-width="1" />
<line x1="803.4" y1="103.8" x2="818.4" y2="103.8" stroke="#3b3b3b" stroke-width="1" />
<line x1="808.4" y1="95.5" x2="808.4" y2="107.9" stroke="#3b3b3b" stroke-width="1" />
<line x1="813.4" y1="95.5" x2="813.4" y2="107.9" stroke="#3b3b3b" stroke-width="1" />
<rect x="806.3" y="99.6" width="5.6" height="5" fill="#7fbdf0" stroke="#2a86d6" stroke-width="1"/>
<rect x="812.8" y="98.2" width="6.6" height="7" fill="#f3f2f1"/>
<path d="M813.6 99.2L818.6 104.2M818.6 99.2L813.6 104.2" fill="none" stroke="#e02020" stroke-width="1.3"/>
<text x="822.3" y="107" font-size="12.4" fill="#444" stroke="#444" stroke-width="0.22" textLength="33.0" lengthAdjust="spacingAndGlyphs">Delete</text>
<path d="M865.9000000000001 101.45L868.7 104.35000000000001L871.5 101.45" fill="none" stroke="#444" stroke-width="1.2"/>
<path d="M806.4 116.8V119M815.6 116.8V119M806.4 117.8H815.6" fill="none" stroke="#1e8bcd" stroke-width="1.1"/>
<rect x="803.5" y="120.2" width="15" height="12.2" fill="#fff" stroke="#3b3b3b" stroke-width="1"/>
<line x1="803.5" y1="123.2" x2="818.5" y2="123.2" stroke="#3b3b3b" stroke-width="1" />
<line x1="803.5" y1="128.3" x2="818.5" y2="128.3" stroke="#3b3b3b" stroke-width="1" />
<line x1="807.4" y1="120.2" x2="807.4" y2="132.4" stroke="#3b3b3b" stroke-width="1" />
<line x1="815" y1="120.2" x2="815" y2="132.4" stroke="#3b3b3b" stroke-width="1" />
<rect x="807.4" y="123.2" width="7.6" height="5.2" fill="#7fbdf0" stroke="#2a86d6" stroke-width="1"/>
<text x="822.3" y="129.8" font-size="12.4" fill="#444" stroke="#444" stroke-width="0.22" textLength="38.1" lengthAdjust="spacingAndGlyphs">Format</text>
<path d="M863.8000000000001 124.35L866.6 127.25L869.4 124.35" fill="none" stroke="#444" stroke-width="1.2"/>
<text x="826.3" y="157" font-size="12.4" fill="#444" stroke="#444" stroke-width="0.22" textLength="23.7" lengthAdjust="spacingAndGlyphs">Cells</text>
<line x1="885.5" y1="69" x2="885.5" y2="156.5" stroke="#c8c6c4" stroke-width="1" />
</g>
<g id="ribbon-editing">
<path d="M910.8 74.6V73H899.6L905.4 79.2L899.6 85.4H910.8V83.8" fill="none" stroke="#3b3b3b" stroke-width="1.2" stroke-linejoin="miter"/>
<path d="M919.6 78.35L922.4 81.25L925.1999999999999 78.35" fill="none" stroke="#444" stroke-width="1.2"/>
<text x="934.5" y="77.9" font-size="9.4" fill="#1e8bcd" stroke="#1e8bcd" stroke-width="0.22" textLength="7.5" lengthAdjust="spacingAndGlyphs" font-weight="bold">A</text>
<text x="934.7" y="86.8" font-size="9.4" fill="#333" textLength="6.9" lengthAdjust="spacingAndGlyphs" stroke="#333" stroke-width="0.4">Z</text>
<path d="M942.6 75.5H950.8L947.9 79.4V83.5H945.5V79.4Z" fill="#fff" stroke="#3b3b3b" stroke-width="1.1" stroke-linejoin="round"/>
<path d="M955.8000000000001 78.35L958.6 81.25L961.4 78.35" fill="none" stroke="#444" stroke-width="1.2"/>
<rect x="897.5" y="95.8" width="15" height="12.6" fill="#fff" stroke="#3b3b3b" stroke-width="1.1"/>
<line x1="897.5" y1="97.4" x2="912.5" y2="97.4" stroke="#3b3b3b" stroke-width="1.4" />
<path d="M904.8 99.8V106.2M902 103.4L904.8 106.3L907.6 103.4" fill="none" stroke="#1e8bcd" stroke-width="1.3"/>
<path d="M917.9000000000001 101.45L920.7 104.35000000000001L923.5 101.45" fill="none" stroke="#444" stroke-width="1.2"/>
<circle cx="945.8" cy="99.5" r="5.1" fill="none" stroke="#3b3b3b" stroke-width="1.2"/>
<line x1="942.2" y1="103.2" x2="936" y2="109.2" stroke="#3b3b3b" stroke-width="1.3" />
<path d="M955.8000000000001 101.45L958.6 104.35000000000001L961.4 101.45" fill="none" stroke="#444" stroke-width="1.2"/>
<path d="M897.8 126.4L906.4 117.8L912.2 123.6L903.6 132.2Z" fill="#fff" stroke="#a23bb5" stroke-width="1.2" stroke-linejoin="round"/>
<path d="M897.8 126.4L901 123.2L906.8 129L903.6 132.2Z" fill="#c86cd6" stroke="#a23bb5" stroke-width="1.2" stroke-linejoin="round"/>
<path d="M917.9000000000001 124.35L920.7 127.25L923.5 124.35" fill="none" stroke="#444" stroke-width="1.2"/>
<text x="912.3" y="157" font-size="12.4" fill="#444" stroke="#444" stroke-width="0.22" textLength="36.8" lengthAdjust="spacingAndGlyphs">Editing</text>
<line x1="975.5" y1="69" x2="975.5" y2="156.5" stroke="#c8c6c4" stroke-width="1" />
<path d="M995.8 156.8L1000.6 152L1005.4 156.8" fill="none" stroke="#444" stroke-width="1.2"/>
</g>
</svg>
</body></html>
